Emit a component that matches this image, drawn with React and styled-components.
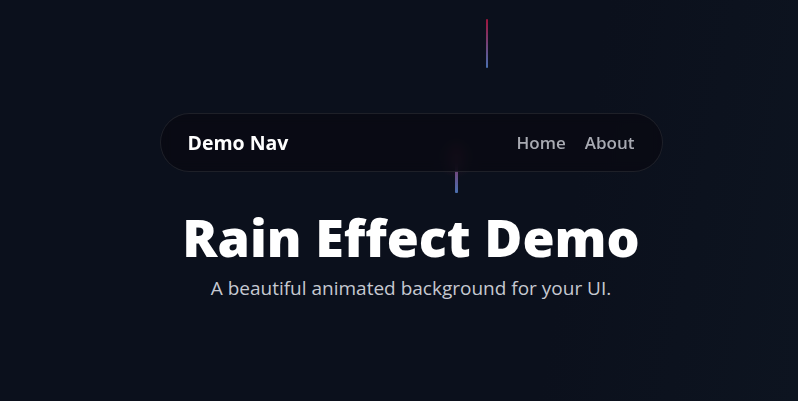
import React from "react";
import styled, { createGlobalStyle } from "styled-components";

const Global = createGlobalStyle`
  html, body { margin: 0; padding: 0; background: #0b101c; }
  body { font-family: "Open Sans", "Noto Sans", sans-serif; }
`;

const Page = styled.div`
  position: relative;
  width: 798px;
  height: 401px;
  overflow: hidden;
  background: linear-gradient(100deg, #0b101c 0%, #0b101c 70%, #0d1420 100%);
  display: flex;
  flex-direction: column;
  align-items: center;
  padding: 113px 0 0 24px;
  box-sizing: border-box;
`;

const Drop = styled.div`
  position: absolute;
  width: ${(p) => p.$w}px;
  background: linear-gradient(to bottom, #a0143c, #4a70b0);
  border-radius: 1px;
`;

const Glow = styled.div`
  position: absolute;
  width: 40px;
  height: 40px;
  border-radius: 50%;
  background: radial-gradient(circle, rgba(140, 30, 70, 0.22), rgba(140, 30, 70, 0) 70%);
`;

const Nav = styled.nav`
  position: relative;
  z-index: 2;
  width: 503px;
  height: 59px;
  box-sizing: border-box;
  border-radius: 30px;
  border: 1px solid rgba(255, 255, 255, 0.09);
  background: rgba(8, 10, 18, 0.82);
  backdrop-filter: blur(6px);
  display: flex;
  align-items: center;
  justify-content: space-between;
  padding: 0 27px 0 27px;
`;

const Brand = styled.div`
  color: #ffffff;
  font-size: 19.5px;
  font-weight: 700;
`;

const Links = styled.div`
  display: flex;
  gap: 19px;
`;

const Link = styled.a`
  color: #a8aab2;
  font-size: 17px;
  font-weight: 600;
  text-decoration: none;
`;

const Title = styled.h1`
  position: relative;
  z-index: 2;
  margin: 34px 0 0;
  color: #ffffff;
  font-size: 52px;
  font-weight: 800;
  line-height: 1.2;
`;

const Subtitle = styled.p`
  position: relative;
  z-index: 2;
  margin: 7px 0 0;
  color: #c6c9d1;
  font-size: 19px;
  font-weight: 400;
`;

export default function App() {
  return (
    <>
      <Global />
      <Page>
        <Drop $w={2} style={{ left: 486, top: 19, height: 49 }} />
        <Glow style={{ left: 436, top: 138 }} />
        <Drop $w={3} style={{ left: 455, top: 145, height: 48 }} />
        <Nav>
          <Brand>Demo Nav</Brand>
          <Links>
            <Link href="#">Home</Link>
            <Link href="#">About</Link>
          </Links>
        </Nav>
        <Title>Rain Effect Demo</Title>
        <Subtitle>A beautiful animated background for your UI.</Subtitle>
      </Page>
    </>
  );
}
